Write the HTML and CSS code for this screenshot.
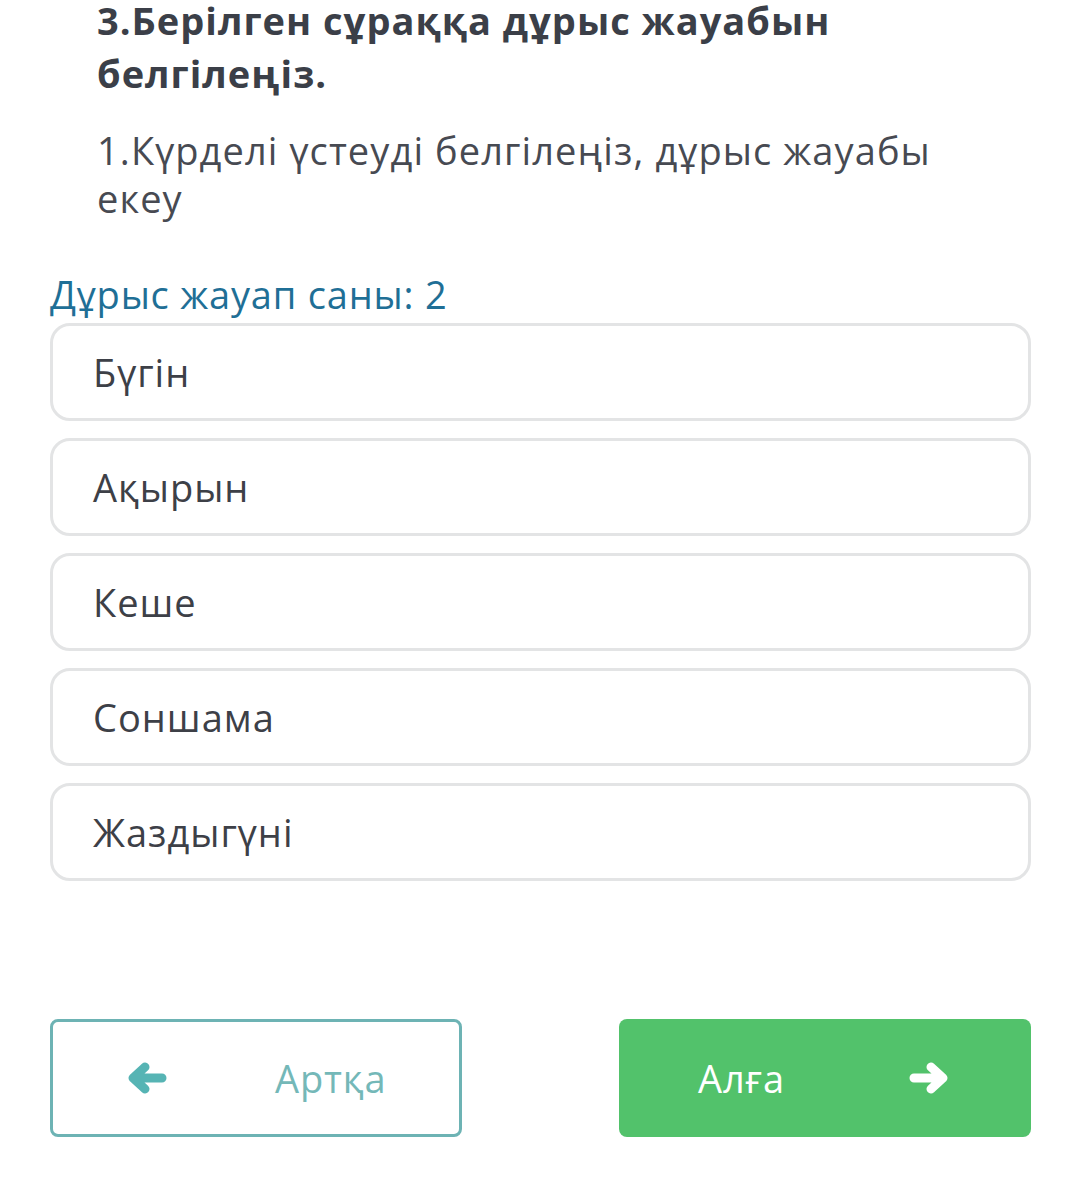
FILE: index.html
```html
<!DOCTYPE html>
<html lang="kk">
<head>
<meta charset="utf-8">
<title>Тест</title>
<link rel="stylesheet" href="styles.css">
</head>
<body>
<div class="page">
  <div class="question">
    <h1 class="title">3.Берілген сұраққа дұрыс жауабын белгілеңіз.</h1>
    <p class="prompt">1.Күрделі үстеуді белгілеңіз, дұрыс жауабы екеу</p>
  </div>
  <div class="count">Дұрыс жауап саны: 2</div>
  <div class="options">
    <div class="option">Бүгін</div>
    <div class="option">Ақырын</div>
    <div class="option">Кеше</div>
    <div class="option">Соншама</div>
    <div class="option">Жаздыгүні</div>
  </div>
  <div class="nav">
    <button class="btn btn-back">
      <svg class="arrow" viewBox="0 0 40 40" width="40" height="40"><path d="M35 20 H7 M18 9 L6 20 L18 31" fill="none" stroke="currentColor" stroke-width="9" stroke-linecap="round" stroke-linejoin="round"/></svg>
      <span class="btn-label">Артқа</span>
    </button>
    <button class="btn btn-next">
      <span class="btn-label">Алға</span>
      <svg class="arrow" viewBox="0 0 40 40" width="40" height="40"><path d="M5 20 H33 M22 9 L34 20 L22 31" fill="none" stroke="currentColor" stroke-width="9" stroke-linecap="round" stroke-linejoin="round"/></svg>
    </button>
  </div>
</div>
</body>
</html>
```

FILE: styles.css
```css
html, body {
  margin: 0;
  padding: 0;
  background: #ffffff;
}
body {
  font-family: "Open Sans", "Noto Sans", "DejaVu Sans", sans-serif;
  color: #3d4047;
}
.page {
  width: 1065px;
  height: 1192px;
  overflow: hidden;
  padding: 0 34px 0 50px;
  box-sizing: border-box;
}
.question {
  padding-left: 47px;
  width: 870px;
}
.title {
  margin: -6px 0 0 0;
  font-size: 38px;
  line-height: 53px;
  letter-spacing: 1px;
  font-weight: 700;
  color: #3b3f48;
}
.prompt {
  margin: 26px 0 0 0;
  font-size: 38px;
  line-height: 48px;
  letter-spacing: 1.1px;
  font-weight: 400;
  color: #474a52;
}
.count {
  margin-top: 49px;
  font-size: 38px;
  line-height: 46px;
  letter-spacing: 0.8px;
  color: #1f6f96;
}
.options {
  display: flex;
  flex-direction: column;
  gap: 17px;
  margin-top: 6px;
}
.option {
  height: 98px;
  box-sizing: border-box;
  border: 3px solid #e3e4e5;
  border-radius: 20px;
  display: flex;
  align-items: center;
  padding-left: 40px;
  font-size: 38px;
  letter-spacing: 1px;
  color: #3d4047;
}
.nav {
  display: flex;
  justify-content: space-between;
  margin-top: 138px;
}
.btn {
  width: 412px;
  height: 118px;
  box-sizing: border-box;
  border-radius: 8px;
  font-family: inherit;
  font-size: 38px;
  letter-spacing: 0.9px;
  display: flex;
  align-items: center;
  padding: 0;
  cursor: pointer;
}
.btn-back {
  background: #ffffff;
  border: 3px solid #6db3b4;
  color: #5db5b7;
}
.btn-back .arrow {
  margin-left: 74px;
  color: #56b4b4;
}
.btn-back .btn-label {
  margin-left: 108px;
  color: #74b8b8;
}
.btn-next {
  background: #52c26b;
  border: none;
  color: #ffffff;
}
.btn-next .btn-label {
  margin-left: 79px;
}
.btn-next .arrow {
  margin-left: 124px;
}
```
